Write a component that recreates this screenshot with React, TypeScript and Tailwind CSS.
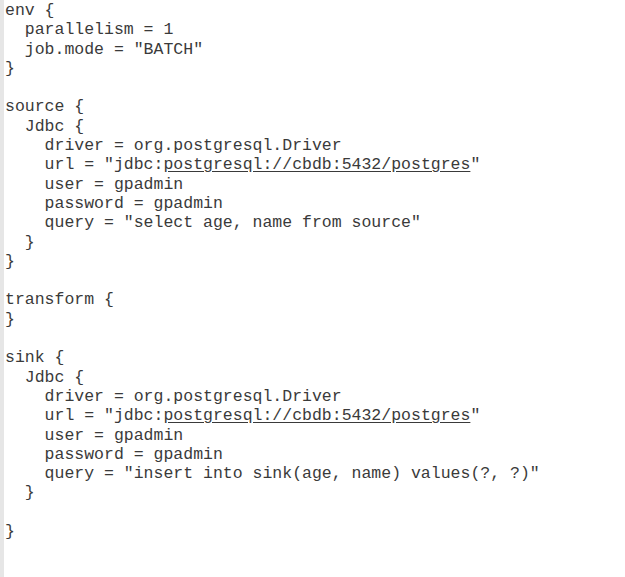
const lines = [
    'env {',
    '  parallelism = 1',
    '  job.mode = "BATCH"',
    '}',
    '',
    'source {',
    '  Jdbc {',
    '    driver = org.postgresql.Driver',
    'URL',
    '    user = gpadmin',
    '    password = gpadmin',
    '    query = "select age, name from source"',
    '  }',
    '}',
    '',
    'transform {',
    '}',
    '',
    'sink {',
    '  Jdbc {',
    '    driver = org.postgresql.Driver',
    'URL',
    '    user = gpadmin',
    '    password = gpadmin',
    '    query = "insert into sink(age, name) values(?, ?)"',
    '  }',
    '',
    '}',
];

function UrlLine() {
    return (
        <>
            {'    url = "jdbc:'}
            <span className="underline underline-offset-2">postgresql://cbdb:5432/postgres</span>
            {'"'}
        </>
    );
}

export default function App() {
    return (
        <div className="w-[625px] h-[577px] bg-white flex overflow-hidden">
            <div className="w-[4px] h-full bg-[#e6e6e6] flex-shrink-0" />
            <pre className="pl-[1px] pt-[1px] text-[16.5px] text-[#3a3a3a] font-['Liberation_Mono','Courier_New',monospace]">
                {lines.map((line, index) => (
                    <div key={index} className="h-[19.3px] leading-[19.3px] whitespace-pre">
                        {line === 'URL' ? <UrlLine /> : line || ' '}
                    </div>
                ))}
            </pre>
        </div>
    );
}
